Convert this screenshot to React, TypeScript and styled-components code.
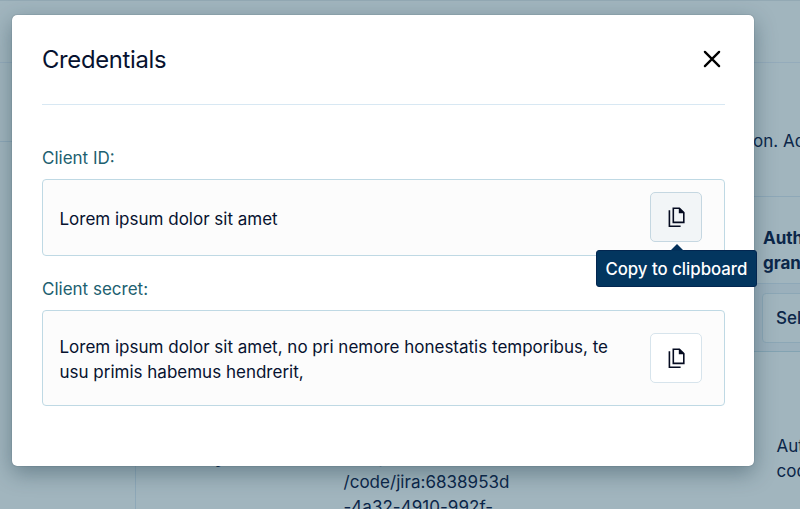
import React from "react";
import styled, { createGlobalStyle } from "styled-components";

const GlobalStyle = createGlobalStyle`
  * { box-sizing: border-box; }
  html, body { margin: 0; overflow: hidden; }
  body { font-family: Inter, "Liberation Sans", sans-serif; }
`;

const LINE = "#8ea8b8";

const Screen = styled.div`
  position: relative;
  width: 800px;
  height: 509px;
  overflow: hidden;
  background: #a1b5be;
  color: #0b2649;
  font-size: 17px;
  line-height: 25px;
`;

const Page = styled.div`
  display: flex;
  flex-direction: column;
  height: 100%;
`;

const TopBar = styled.div`
  flex: 0 0 63px;
  border-top: 1px solid #93a9b4;
  border-bottom: 1px solid #94abbb;
`;

const Columns = styled.div`
  flex: 1;
  min-height: 0;
  display: grid;
  grid-template-columns: 136px 614px 50px;
`;

const SideColumn = styled.div`
  border-right: 1px solid ${LINE};
`;

const SideHeader = styled.div`
  height: 79px;
  border-bottom: 1px solid ${LINE};
`;

const DetailColumn = styled.div`
  display: grid;
  grid-template-columns: 207.5px 1fr;
  align-content: start;
  padding-top: 382px;
  white-space: nowrap;
`;

const DetailName = styled.div`
  padding-right: 118px;
  font-weight: 700;
  text-align: right;
`;

const DetailValue = styled.div`
  letter-spacing: 0.03px;
`;

const RightColumn = styled.div`
  display: flex;
  flex-direction: column;
  white-space: nowrap;
  overflow: hidden;
`;

const Intro = styled.div`
  height: 134px;
  padding: 66px 0 0 3px;
  border-bottom: 1px solid ${LINE};
`;

const HeaderCell = styled.div`
  height: 87px;
  padding: 29px 0 0 13px;
  border-bottom: 1px solid ${LINE};
  font-weight: 700;
`;

const SelectRow = styled.div`
  height: 68px;
  padding: 9px 0 0 12px;
  border-bottom: 1px solid #83a3b2;
  background: #9bb0bc;
`;

const Select = styled.div`
  width: 80px;
  height: 50px;
  padding: 12px 13px;
  border: 1px solid #8ca7b6;
  border-radius: 4px;
  background: #a1b5be;
  font-weight: 500;
`;

const GrantCell = styled.div`
  padding: 82px 0 0 26.5px;
`;

const Overlay = styled.div`
  position: absolute;
  inset: 0;
  padding: 14.5px 0 0 12px;
`;

const Dialog = styled.section`
  width: 742.4px;
  height: 451.5px;
  padding: 0 29.9px 0 30px;
  border-radius: 5px;
  background: #fff;
  box-shadow: 0 0 1px rgba(20, 50, 65, 0.7), 0 7px 22px rgba(20, 50, 65, 0.4);
`;

const Header = styled.header`
  display: flex;
  align-items: center;
  justify-content: space-between;
  height: 90px;
  padding-right: 3.5px;
  border-bottom: 1px solid #d8e8f3;
`;

const Title = styled.h1`
  margin: 2px 0 0;
  color: #07122f;
  font-size: 23.8px;
  font-weight: 400;
  letter-spacing: -0.3px;
  line-height: 30px;
`;

const CloseButton = styled.button`
  display: flex;
  padding: 0;
  border: 0;
  background: none;
  color: #000;
`;

const Field = styled.div<{ $first?: boolean }>`
  padding-top: ${(p) => (p.$first ? 41 : 21)}px;
`;

const Label = styled.div`
  height: 25px;
  margin-bottom: 8.5px;
  color: #215f70;
`;

const ValueBox = styled.div<{ $height: number }>`
  display: flex;
  align-items: center;
  justify-content: space-between;
  height: ${(p) => p.$height}px;
  padding: 0 21.6px 0 16.5px;
  border: 1px solid #bfd9e4;
  border-radius: 4px;
  background: #fcfcfc;
`;

const Value = styled.div`
  width: 570px;
  padding-top: 3.5px;
  color: #07122f;
`;

const CopyButton = styled.button<{ $hovered?: boolean }>`
  position: relative;
  display: flex;
  align-items: center;
  justify-content: center;
  flex: 0 0 52px;
  height: 50px;
  padding: 0;
  border: 1px solid ${(p) => (p.$hovered ? "#c5d7e1" : "#d7e4ec")};
  border-radius: 5px;
  background: ${(p) => (p.$hovered ? "#f2f5f7" : "#fff")};
  font: inherit;
`;

const Tooltip = styled.span`
  position: absolute;
  top: 57px;
  right: -56px;
  width: 161px;
  height: 37px;
  border: 1px solid #032650;
  border-radius: 3px;
  background: #03365f;
  color: #fff;
  font-size: 16.8px;
  font-weight: 500;
  line-height: 36px;
  text-align: center;
  white-space: nowrap;

  &::before {
    content: "";
    position: absolute;
    top: -7px;
    left: 73px;
    border: 7px solid transparent;
    border-top: 0;
    border-bottom-color: #03305a;
  }
`;

const CopyIcon = () => (
  <svg width="18" height="20" viewBox="0 0 18 20" fill="none" stroke="#050b20" strokeWidth="1.6">
    <path d="M2.4 3.3V19.2H13.6" />
    <path d="M6.3 1.2H12.4L16.8 5.7V15.4H6.3Z" />
    <path d="M11.8 .7V6.3H17.4Z" fill="#050b20" stroke="none" />
  </svg>
);

const CloseIcon = () => (
  <svg width="18" height="18" viewBox="0 0 18 18" stroke="#000" strokeWidth="2.3" strokeLinecap="round">
    <path d="M1.9 1.9L16.1 16.1M16.1 1.9L1.9 16.1" />
  </svg>
);

export default function App() {
  return (
    <Screen>
      <GlobalStyle />
      <Page>
        <TopBar />
        <Columns>
          <SideColumn>
            <SideHeader />
          </SideColumn>
          <DetailColumn>
            <DetailName>Key</DetailName>
            <DetailValue>
              /scope
              <br />
              /code/jira:6838953d
              <br />
              -4a32-4910-992f-
            </DetailValue>
          </DetailColumn>
          <RightColumn>
            <Intro>on. Add</Intro>
            <HeaderCell>
              Auth
              <br />
              grant
            </HeaderCell>
            <SelectRow>
              <Select>Select</Select>
            </SelectRow>
            <GrantCell>
              Auth
              <br />
              code
            </GrantCell>
          </RightColumn>
        </Columns>
      </Page>
      <Overlay>
        <Dialog>
          <Header>
            <Title>Credentials</Title>
            <CloseButton aria-label="Close">
              <CloseIcon />
            </CloseButton>
          </Header>
          <Field $first>
            <Label>Client ID:</Label>
            <ValueBox $height={76.5}>
              <Value>Lorem ipsum dolor sit amet</Value>
              <CopyButton $hovered aria-label="Copy to clipboard">
                <CopyIcon />
                <Tooltip>Copy to clipboard</Tooltip>
              </CopyButton>
            </ValueBox>
          </Field>
          <Field>
            <Label>Client secret:</Label>
            <ValueBox $height={96}>
              <Value>
                Lorem ipsum dolor sit amet, no pri nemore honestatis temporibus, te
                usu primis habemus hendrerit,
              </Value>
              <CopyButton aria-label="Copy to clipboard">
                <CopyIcon />
              </CopyButton>
            </ValueBox>
          </Field>
        </Dialog>
      </Overlay>
    </Screen>
  );
}
